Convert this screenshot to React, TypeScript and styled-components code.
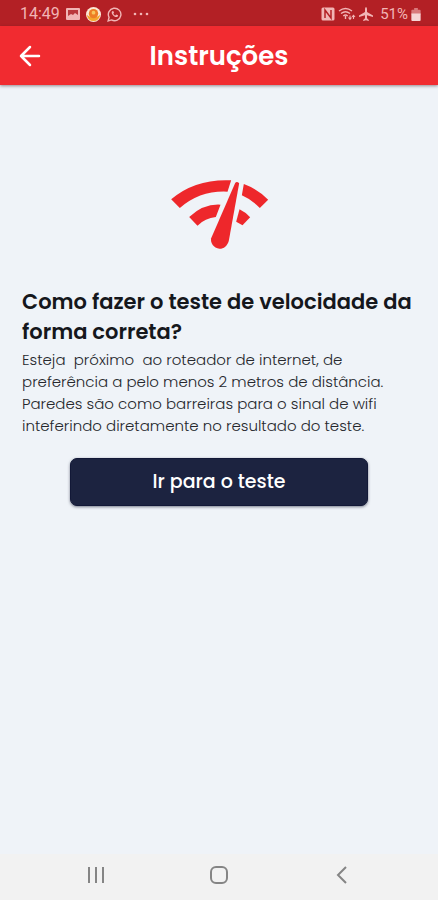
import React from "react";
import styled, { createGlobalStyle } from "styled-components";

const GlobalStyle = createGlobalStyle`
  * { box-sizing: border-box; }
  body { margin: 0; background: #eff3f8; }
`;

const Screen = styled.div`
  min-height: 100vh;
  display: flex;
  flex-direction: column;
  background: #eff3f8;
  color: #15171c;
  font-family: Poppins, Inter, sans-serif;
`;

const StatusBar = styled.div`
  height: 26px;
  padding: 2px 17px 0 20px;
  display: flex;
  align-items: center;
  justify-content: space-between;
  background: #b32025;
  color: #f1b5b5;
  font-family: Roboto, sans-serif;
`;

const StatusGroup = styled.div<{ $gap: number }>`
  display: flex;
  align-items: center;
  gap: ${(p) => p.$gap}px;
  svg { display: block; }
`;

const Clock = styled.span`
  font-size: 16px;
  line-height: 20px;
`;

const Battery = styled.span`
  display: flex;
  align-items: center;
  gap: 3px;
  margin-left: 4px;
  font-size: 15px;
  line-height: 20px;
`;

const AppBar = styled.header`
  height: 59px;
  padding: 0 16px;
  display: grid;
  grid-template-columns: 28px 1fr 28px;
  align-items: center;
  background: #f12b30;
  color: #fff;
  box-shadow: 0 1px 3px rgba(60, 30, 40, 0.5);
`;

const IconButton = styled.button`
  display: flex;
  align-items: center;
  justify-content: center;
  padding: 0;
  border: 0;
  background: none;
  color: inherit;
  cursor: pointer;
`;

const Title = styled.h1`
  margin: 0;
  text-align: center;
  font-size: 26px;
  line-height: 32px;
  font-weight: 600;
`;

const Content = styled.main`
  flex: 1;
  display: flex;
  flex-direction: column;
  padding: 93px 22px 0;
`;

const Logo = styled.svg`
  display: block;
  align-self: center;
  width: 99px;
  height: 72px;
`;

const Heading = styled.h2`
  margin: 37px 0 0;
  font-size: 21px;
  line-height: 30px;
  font-weight: 600;
  white-space: pre-line;
`;

const Instructions = styled.p`
  margin: 2px 0 0;
  font-size: 15px;
  line-height: 22px;
  font-weight: 300;
  color: #26282d;
  white-space: pre-wrap;
`;

const PrimaryButton = styled.button`
  height: 48px;
  margin: 21px 48px 0;
  border: 1px solid #121837;
  border-radius: 7px;
  background: #1c2340;
  color: #fff;
  font: 500 19px/28px Poppins, Inter, sans-serif;
  box-shadow: 0 1px 3px rgba(20, 25, 50, 0.55);
  cursor: pointer;
`;

const NavBar = styled.nav`
  height: 46px;
  padding: 0 35px 4px;
  display: grid;
  grid-template-columns: repeat(3, 1fr);
  align-items: center;
  background: #f2f2f2;
  color: #858585;
`;

function StatusIcons() {
  return (
    <StatusGroup $gap={6}>
      <Clock>14:49</Clock>
      <svg width="14" height="14" viewBox="0 0 14 14" aria-hidden="true">
        <rect y="1" width="14" height="12" rx="1" fill="#f1b5b5" />
        <path d="M2 3h10v5L9 6 7 8 5 7 2 9z" fill="#b9383c" />
      </svg>
      <svg width="15" height="15" viewBox="0 0 16 16" aria-hidden="true">
        <circle cx="8" cy="8" r="8" fill="#fbe9d6" />
        <path d="M1 8q2 3 7 3t7-3a7 7 0 0 1-14 0z" fill="#f4a62e" />
        <circle cx="8" cy="7" r="5" fill="#ee7d25" />
        <circle cx="8" cy="6" r="2" fill="#f8c45c" />
      </svg>
      <svg width="15" height="15" viewBox="0 0 16 16" fill="none" stroke="#f1b5b5" aria-hidden="true">
        <path d="M1.2 14.8l1-3.7a6.7 6.7 0 1 1 2.6 2.7z" strokeWidth="1.5" />
        <path d="M5.5 4.4c-2 2 2.5 7.4 5.6 6.2l.8-1.7-2-.9-1 1C7.7 8.5 7 7.7 6.7 6.8l.8-.8-.8-1.8z" fill="#f1b5b5" stroke="none" />
      </svg>
      <svg width="22" height="4" viewBox="0 0 22 4" fill="#f1b5b5" aria-hidden="true">
        <circle cx="7" cy="2" r="1.3" />
        <circle cx="13" cy="2" r="1.3" />
        <circle cx="19" cy="2" r="1.3" />
      </svg>
    </StatusGroup>
  );
}

function SystemIcons() {
  return (
    <StatusGroup $gap={3}>
      <svg width="14" height="14" viewBox="0 0 14 14" aria-hidden="true">
        <rect x=".5" y=".5" width="13" height="13" rx="1.5" fill="#f1b5b5" />
        <path d="M4 11V3l6 8V3" fill="none" stroke="#b32025" strokeWidth="1.5" />
      </svg>
      <svg width="18" height="14" viewBox="0 0 18 14" fill="none" stroke="#f1b5b5" strokeWidth="1.4" aria-hidden="true">
        <path d="M1 4q6.500-5 13 0M3 6.500q4.500-3.500 9 0M5.300 9q2.200-2 4.400 0" />
        <path d="M7.500 9v3" />
        <path d="M12 12V8.500M10.500 10.500L12 12.300l1.500-1.800M15.500 12V8.500M14 10l1.500-1.700L17 10" strokeWidth="1.1" />
      </svg>
      <svg width="14" height="14" viewBox="0 0 14 14" fill="#f1b5b5" aria-hidden="true">
        <path d="M7 0q1 .3 1 2v3l6 3.500V10L8 8.300v3L9.800 13v1L7 13.200 4.200 14v-1L6 11.300v-3L0 10V8.500L6 5V2q0-1.700 1-2z" />
      </svg>
      <Battery>
        51%
        <svg width="10" height="13" viewBox="0 0 10 14" aria-hidden="true">
          <path d="M3 0h4v2h2a1 1 0 0 1 1 1v4H0V3a1 1 0 0 1 1-1h2z" fill="#d9797b" />
          <path d="M0 6h10v7a1 1 0 0 1-1 1H1a1 1 0 0 1-1-1z" fill="#f6d5d5" />
        </svg>
      </Battery>
    </StatusGroup>
  );
}

export default function App() {
  return (
    <>
      <GlobalStyle />
      <Screen>
        <StatusBar>
          <StatusIcons />
          <SystemIcons />
        </StatusBar>
        <AppBar>
          <IconButton aria-label="Voltar">
            <svg width="22" height="22" viewBox="0 0 22 22" fill="none" stroke="currentColor" strokeWidth="2.5" strokeLinecap="round" strokeLinejoin="round">
              <path d="M20 11H2M11 2L2 11l9 9" />
            </svg>
          </IconButton>
          <Title>Instruções</Title>
        </AppBar>
        <Content>
          <Logo viewBox="60 55 296 216" fill="#ee272b" role="img" aria-label="Teste de velocidade">
            <path d="M63 119Q135 57 243 62L232 96Q150 92 89 145Z" />
            <path d="M281 73Q322 88 354 120L329 145Q305 120 275 107Z" />
            <path d="M117 172Q160 132 211 135L197 172Q165 175 142 198Z" />
            <path d="M268 149Q285 157 300 173L277 197 258 186Z" />
            <path d="M255 70Q260 64 267 71L236 243C231 259 221 267 208 267 190 266 180 249 183 236Z" />
          </Logo>
          <Heading>{"Como fazer o teste de velocidade da\nforma correta?"}</Heading>
          <Instructions>
            {"Esteja  próximo  ao roteador de internet, de\npreferência a pelo menos 2 metros de distância.\nParedes são como barreiras para o sinal de wifi\ninteferindo diretamente no resultado do teste."}
          </Instructions>
          <PrimaryButton>Ir para o teste</PrimaryButton>
        </Content>
        <NavBar>
          <IconButton aria-label="Recentes">
            <svg width="18" height="18" viewBox="0 0 18 18" fill="none" stroke="currentColor" strokeWidth="2">
              <path d="M2 1v16M9 1v16M16 1v16" />
            </svg>
          </IconButton>
          <IconButton aria-label="Início">
            <svg width="20" height="20" viewBox="0 0 20 20" fill="none" stroke="currentColor" strokeWidth="2">
              <rect x="2" y="2" width="16" height="16" rx="5" />
            </svg>
          </IconButton>
          <IconButton aria-label="Voltar à tela anterior">
            <svg width="18" height="18" viewBox="0 0 18 18" fill="none" stroke="currentColor" strokeWidth="2">
              <path d="M13 1L5 9l8 8" />
            </svg>
          </IconButton>
        </NavBar>
      </Screen>
    </>
  );
}
